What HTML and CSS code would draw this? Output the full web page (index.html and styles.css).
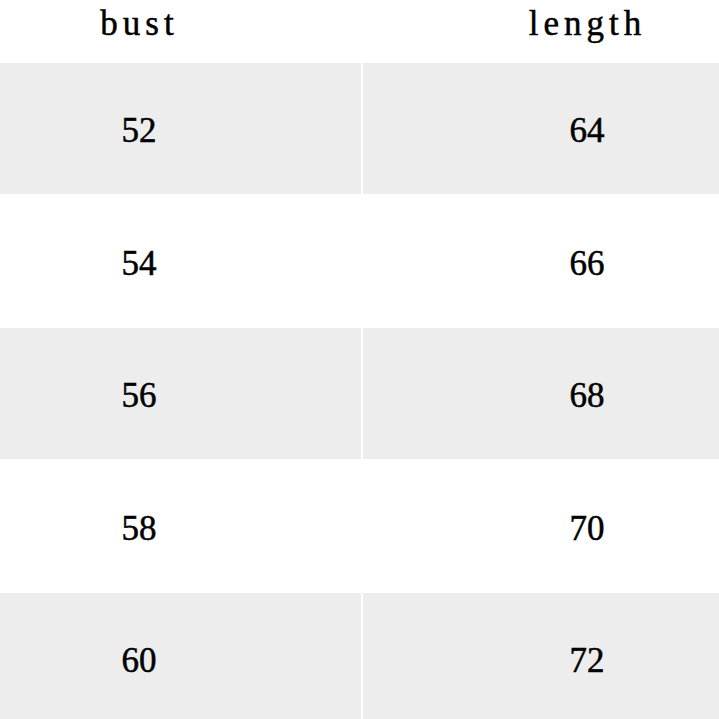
FILE: index.html
```html
<!DOCTYPE html>
<html>
<head>
<meta charset="utf-8">
<link rel="stylesheet" href="styles.css">
</head>
<body>
<div class="table">
  <div class="cell head">bust</div>
  <div class="cell head">length</div>
  <div class="cell gray r-a">52</div>
  <div class="cell gray r-a">64</div>
  <div class="cell r-b">54</div>
  <div class="cell r-b">66</div>
  <div class="cell gray r-a">56</div>
  <div class="cell gray r-a">68</div>
  <div class="cell r-b">58</div>
  <div class="cell r-b">70</div>
  <div class="cell gray r-last">60</div>
  <div class="cell gray r-last">72</div>
</div>
</body>
</html>
```

FILE: styles.css
```css
html, body {
  margin: 0;
  padding: 0;
  background: #ffffff;
  overflow: hidden;
  width: 719px;
  height: 719px;
}

.table {
  display: grid;
  grid-template-columns: 444px 448px;
  column-gap: 2px;
  margin-left: -83px;
  width: 894px;
  font-family: "Liberation Serif", "Times New Roman", serif;
  font-size: 35px;
  color: #000;
  -webkit-text-stroke: 0.5px #000;
}

.cell {
  display: flex;
  align-items: center;
  justify-content: center;
  line-height: 1;
  box-sizing: border-box;
  padding-top: 4px;
}

.head {
  height: 63px;
  align-items: flex-start;
  padding-top: 6px;
  letter-spacing: 5px;
  text-indent: 1px;
}

.gray {
  background: #ecedec;
}

.r-a {
  height: 131px;
}

.r-b {
  height: 134px;
}

.r-last {
  height: 130px;
}
```
